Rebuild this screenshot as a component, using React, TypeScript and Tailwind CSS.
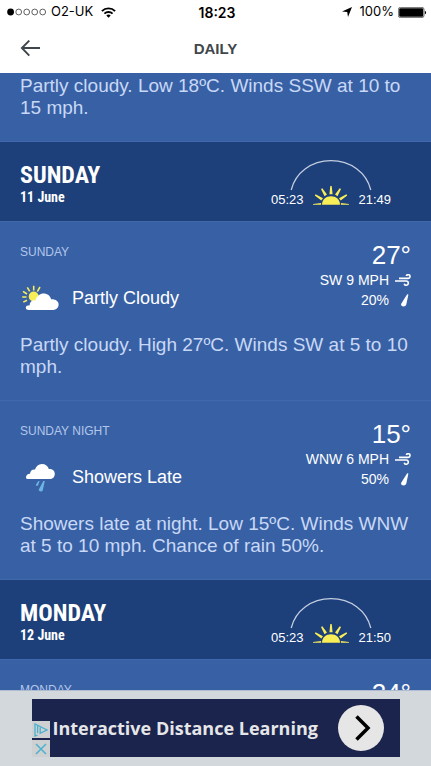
import React from "react";

const sans = "font-['Liberation_Sans',Arial,sans-serif]";
const narrow = "font-['Roboto_Condensed','Arial_Narrow',sans-serif]";

function StatusBar() {
  return (
    <div className="grid h-6 grid-cols-[1fr_auto_1fr] items-center pr-1 pl-[7px] font-['Inter',sans-serif] text-[13px] text-black">
      <div className="flex items-center">
        <svg width="40" height="8" viewBox="0 0 40 8" aria-hidden="true">
          <circle cx="3.6" cy="4" r="3.4" />
          {[11.7, 19.7, 27.7, 35.7].map((x) => (
            <circle key={x} cx={x} cy="4" r="2.9" fill="none" stroke="#222" strokeWidth="0.7" />
          ))}
        </svg>
        <span className="ml-1">O2-UK</span>
        <svg className="ml-2" width="15" height="11" viewBox="0 0 15 11" fill="none" stroke="#000" aria-hidden="true">
          <path d="M0.9 4.1a9.4 9.4 0 0 1 13.2 0" strokeWidth="1.9" />
          <path d="M3.4 6.7a5.8 5.8 0 0 1 8.2 0" strokeWidth="1.8" />
          <path d="M7.5 10.8 5.3 8.6a3.1 3.1 0 0 1 4.4 0z" fill="#000" stroke="none" />
        </svg>
      </div>
      <span className="text-[14px] font-semibold">18:23</span>
      <div className="flex items-center justify-end">
        <svg width="10" height="10" viewBox="0 0 10 10" aria-hidden="true">
          <path d="M10 0 6 10 5.2 5 0 4.4z" />
        </svg>
        <span className="ml-2">100%</span>
        <svg className="ml-1" width="29" height="11" viewBox="0 0 29 11" aria-hidden="true">
          <rect x="0.4" y="0.4" width="25.6" height="10.2" rx="2" fill="#fff" stroke="#333" strokeWidth="0.7" />
          <rect x="1.2" y="1.2" width="24" height="8.6" rx="1.2" />
          <path d="M26.9 3.7c1.6.5 1.6 3.1 0 3.6z" />
        </svg>
      </div>
    </div>
  );
}

function NavBar() {
  return (
    <div className="grid h-[49px] grid-cols-[1fr_auto_1fr] items-center px-5 text-[#3f474c]">
      <button type="button" aria-label="Back" className="justify-self-start">
        <svg width="20" height="17" viewBox="0 0 20 17" fill="none" stroke="currentColor" strokeWidth="1.9" aria-hidden="true">
          <path d="M20 8H2M9.3 0.600 1.900 8l7.400 7.600" />
        </svg>
      </button>
      <h1 className="pt-[2px] text-[15px] font-bold">DAILY</h1>
    </div>
  );
}

function SunArc({ rise, set }: { rise: string; set: string }) {
  return (
    <div className="mr-5 flex w-[120px] flex-col items-center text-[13px] leading-4">
      <svg width="82" height="32" viewBox="0 0 82 32" fill="none" aria-hidden="true">
        <path d="M1.2 30C5.5 12.5 21.5 0.700 41 0.700s35.5 11.800 39.800 29.300" stroke="#c3cde0" strokeWidth="1.3" />
      </svg>
      <div className="-mt-[6px] flex w-full items-end justify-between">
        <span>{rise}</span>
        <svg width="36" height="22" viewBox="0 0 36 22" fill="#f8ee57" aria-hidden="true">
          <path d="M9 18.800C9 13.500 13 10.300 18 10.300s9 3.200 9 8.500z" />
          <path d="M17.300 0h1.400l.9 8.300h-3.200zM8 2.900l1.300-.7 4.700 6.300-2.500 1.700zM28 2.900l-1.300-.7-4.700 6.300 2.500 1.700zM1.800 9.500l.8-1.200 7.400 4-1.700 2.300zM34.200 9.500l-.8-1.200-7.400 4 1.700 2.300zM0 18.800v-.7l8.100-1v1.700zM36 18.800v-.7l-8.100-1v1.700z" />
        </svg>
        <span>{set}</span>
      </div>
    </div>
  );
}

function DayHeader({ day, date, rise, set }: { day: string; date: string; rise: string; set: string }) {
  return (
    <header className="flex h-20 shrink-0 items-center justify-between border-t border-[#4069ad] bg-[#1d3f7a] px-5 pt-1 text-white">
      <div className={`${narrow} font-bold`}>
        <h2 className="text-[24px] leading-[26px]">{day}</h2>
        <p className="text-[14px] leading-[18px]">{date}</p>
      </div>
      <SunArc rise={rise} set={set} />
    </header>
  );
}

function PartlyCloudy() {
  return (
    <svg className="ml-[2px]" width="38" height="26" viewBox="0 0 38 26" aria-hidden="true">
      <g stroke="#f8ee57" strokeWidth="1.6">
        <path d="M11.7 5.500V0.800M15.300 6.600l2.700-4.600M7.700 6.300 5.300 2.300M5 9 1 6.300M4.500 12H0.200M5 15.300l-3.700 1.800" />
      </g>
      <circle cx="11.700" cy="11.500" r="5" fill="#f8ee57" />
      <path d="M7 25c-2 0-3.200-1-3.200-2.300 0-1.800 2-2.500 4-2.400-.4-3 2.400-5.300 5.600-4.900C15 11 18 8.500 21.500 8.500c4 0 6.800 2.300 7.600 5.800 4.300-.3 7.500 1.900 7.500 5.200 0 3.300-2.600 5.500-6 5.500z" fill="#fff" />
    </svg>
  );
}

function Showers() {
  return (
    <svg className="ml-[5px]" width="32" height="30" viewBox="0 0 32 30" aria-hidden="true">
      <path d="M2.500 17C1.500 17 1 16.200 1 15.300c0-2 1.700-3.300 4-3.500.2-3 2.500-4.600 5-4.200C11.200 4.200 13.500 2 16.800 2c3.700 0 6.300 2 7 5 3.600-.2 6 1.700 6 4.900 0 3-2.200 5.100-5.300 5.100z" fill="#fff" />
      <g fill="#6db5e4">
        <path d="M18.300 19h1.500l-2 9.200c-.6 2-4.500 1.400-4-.8zM13.400 19h1.200l-1.500 4.200c-.7 1.200-2.600.6-2.100-.7z" />
      </g>
    </svg>
  );
}

function WindIcon() {
  return (
    <svg width="16" height="12" viewBox="0 0 16 12" fill="none" stroke="#fff" strokeWidth="1.6" aria-hidden="true">
      <path d="M4 4.400H13.200a1.900 1.900 0 1 0-1.900-2.400M0 7h11.200a2.100 2.100 0 1 1-2 2.700" />
    </svg>
  );
}

function DropIcon() {
  return (
    <svg width="16" height="13" viewBox="0 0 16 13" fill="#fff" aria-hidden="true">
      <path d="M12.200 0.200 13.400 0.500 11.300 10.600C10.500 13.600 5 12.600 6.200 9.700z" />
    </svg>
  );
}

type ForecastProps = {
  label: string;
  icon?: React.ReactNode;
  condition?: string;
  temp: string;
  wind?: string;
  rain?: string;
  text?: string;
};

function Forecast({ label, icon, condition, temp, wind, rain, text }: ForecastProps) {
  return (
    <section className="shrink-0 border-t border-[#4069ad] px-5 pt-[18px] pb-[22px]">
      <div className="flex justify-between">
        <div>
          <h3 className="text-[12px] leading-6 text-[#b3c6ea]">{label}</h3>
          {condition && (
            <div className="mt-[18px] flex h-8 items-center">
              <div className="w-[52px]">{icon}</div>
              <span className="text-[18px] text-white">{condition}</span>
            </div>
          )}
        </div>
        <div className="text-right text-[14px] leading-5 text-white">
          <p className="text-[26px] leading-[30px]">{temp}</p>
          {wind && (
            <p className="flex items-center justify-end gap-[6px]">
              {wind}
              <WindIcon />
            </p>
          )}
          {rain && (
            <p className="flex items-center justify-end gap-[6px]">
              {rain}
              <DropIcon />
            </p>
          )}
        </div>
      </div>
      {text && <p className="mt-5 -mr-2 text-[19px] leading-[22px] text-[#c8d8f6]">{text}</p>}
    </section>
  );
}

function AdBanner() {
  return (
    <aside className="flex h-[76px] shrink-0 justify-center border-t border-[#aebbd0] bg-[#d3d8dc] pt-2">
      <div className="flex h-[58px] w-[368px] items-center bg-[#1a244d]">
        <div className="flex w-[18px] flex-col gap-[2px] self-end">
          <button type="button" aria-label="Ad choices" className="flex h-[17px] items-center justify-center bg-[#cfd0d2]">
            <svg width="14" height="14" viewBox="0 0 14 14" fill="none" stroke="#48b2cf" strokeWidth="1.3" aria-hidden="true">
              <path d="M3.600 12 1 13V1l12 6-6.800 3.300V4.500M3.600 3v7" />
            </svg>
          </button>
          <button type="button" aria-label="Close ad" className="flex h-[17px] items-center justify-center bg-[#cfd0d2]">
            <svg width="12" height="12" viewBox="0 0 12 12" stroke="#48b2cf" strokeWidth="1.5" aria-hidden="true">
              <path d="M1 1l10 10M11 1 1 11" />
            </svg>
          </button>
        </div>
        <a href="#learn" className="flex flex-1 items-center justify-between pr-4 pl-[3px] font-['Open_Sans',sans-serif] text-[18px] font-bold whitespace-nowrap text-[#e6e6e8]">
          Interactive Distance Learning
          <svg className="shrink-0" width="46" height="46" viewBox="0 0 46 46" aria-hidden="true">
            <circle cx="23" cy="23" r="23" fill="#e6e6e6" />
            <path d="M18.500 11.500 30 23 18.500 34.500" fill="none" stroke="#000" strokeWidth="3.5" />
          </svg>
        </a>
      </div>
    </aside>
  );
}

export default function App() {
  return (
    <div className={`${sans} flex h-screen flex-col overflow-hidden bg-white`}>
      <StatusBar />
      <NavBar />
      <main className="flex min-h-0 flex-1 flex-col overflow-hidden bg-[#3861a5]">
        <p className="shrink-0 px-5 pt-[2px] pb-[22px] text-[19px] leading-[22px] text-[#c8d8f6]">
          Partly cloudy. Low 18ºC. Winds SSW at 10 to 15 mph.
        </p>
        <DayHeader day="SUNDAY" date="11 June" rise="05:23" set="21:49" />
        <Forecast
          label="SUNDAY"
          icon={<PartlyCloudy />}
          condition="Partly Cloudy"
          temp="27°"
          wind="SW 9 MPH"
          rain="20%"
          text="Partly cloudy. High 27ºC. Winds SW at 5 to 10 mph."
        />
        <Forecast
          label="SUNDAY NIGHT"
          icon={<Showers />}
          condition="Showers Late"
          temp="15°"
          wind="WNW 6 MPH"
          rain="50%"
          text="Showers late at night. Low 15ºC. Winds WNW at 5 to 10 mph. Chance of rain 50%."
        />
        <DayHeader day="MONDAY" date="12 June" rise="05:23" set="21:50" />
        <Forecast label="MONDAY" temp="24°" />
      </main>
      <AdBanner />
    </div>
  );
}
